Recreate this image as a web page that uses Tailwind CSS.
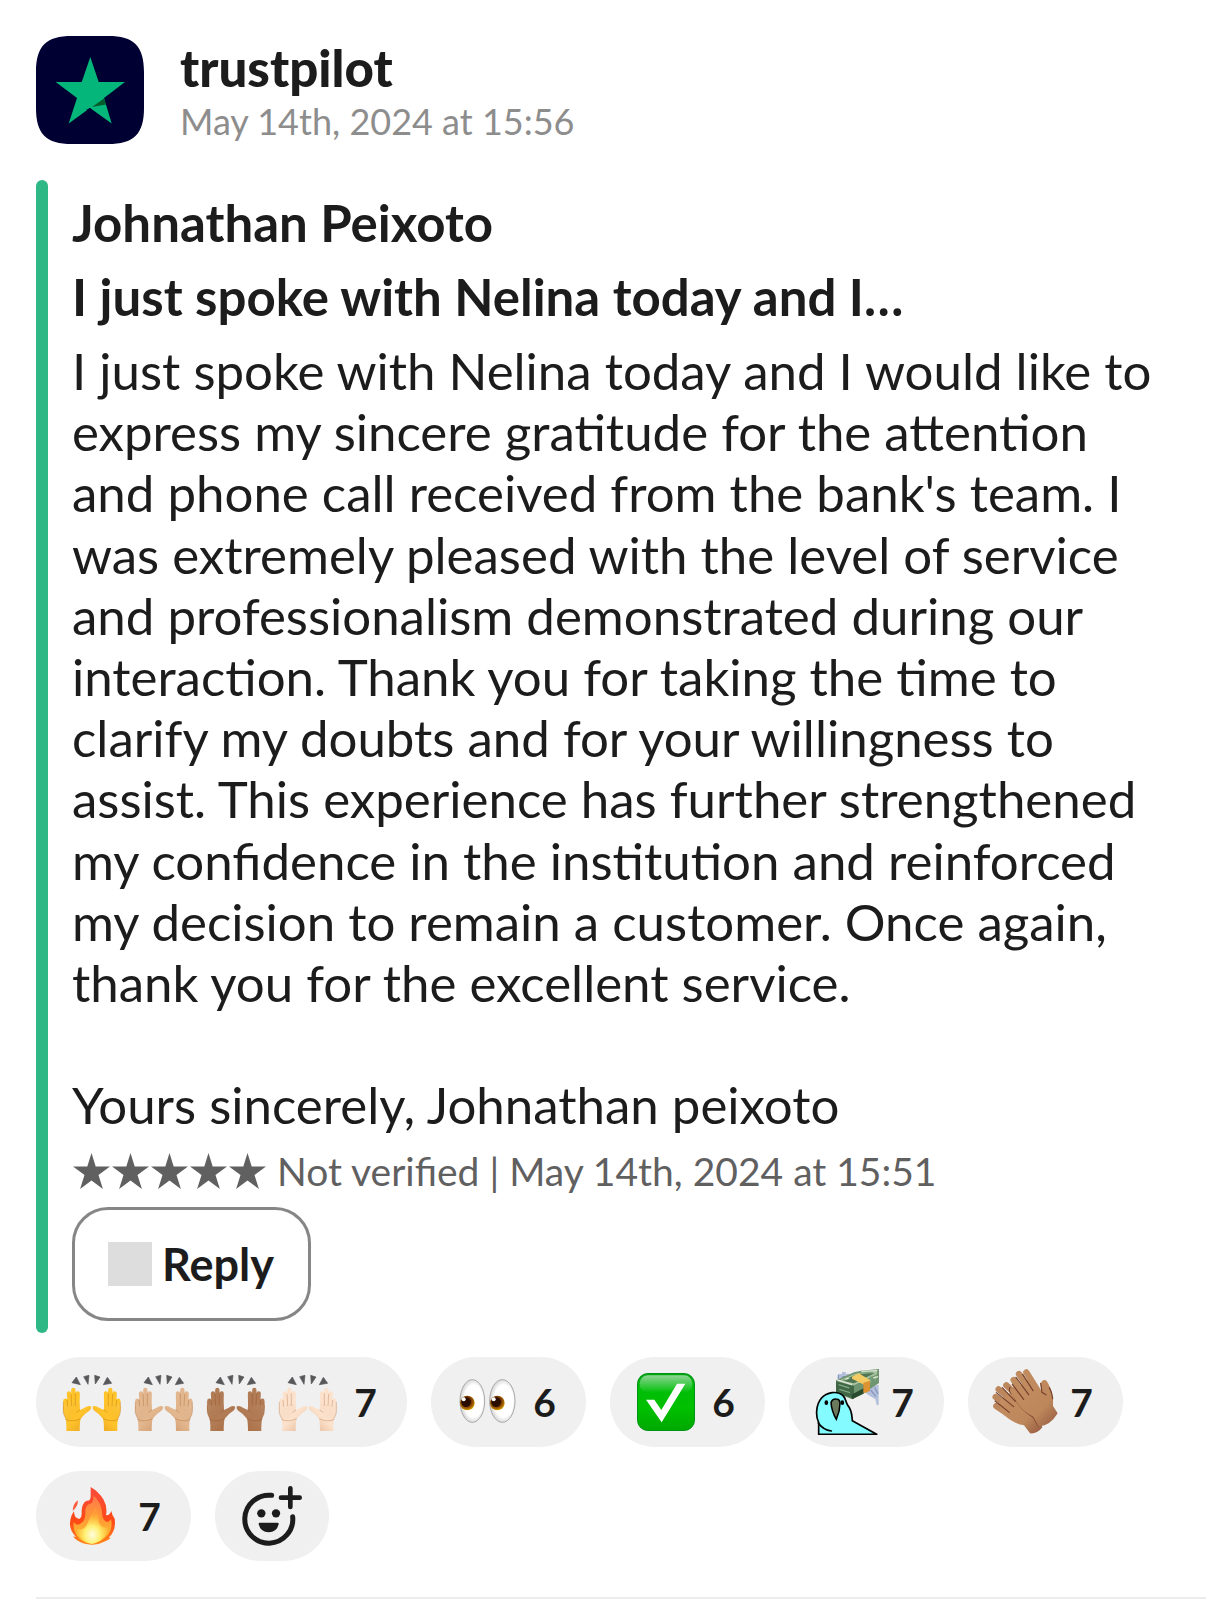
<!DOCTYPE html>
<html lang="en">
<head>
<meta charset="utf-8">
<meta name="viewport" content="width=device-width, initial-scale=1">
<title>trustpilot message</title>
<script src="https://cdn.jsdelivr.net/npm/@tailwindcss/browser@4"></script>
</head>
<body class="bg-white font-['Lato',sans-serif] text-[#1d1c1d]">
<svg class="absolute size-0" aria-hidden="true">
  <defs>
    <linearGradient id="handShade" x1="0" y1="0" x2="1" y2="1">
      <stop offset="0" stop-color="#fff" stop-opacity=".12"/><stop offset=".5" stop-color="#a04000" stop-opacity="0"/><stop offset="1" stop-color="#a04000" stop-opacity=".3"/>
    </linearGradient>
    <linearGradient id="checkGreen" x1="0" y1="0" x2="0" y2="1">
      <stop offset="0" stop-color="#00a310"/><stop offset=".25" stop-color="#00bd08"/><stop offset=".6" stop-color="#00c000"/><stop offset="1" stop-color="#00a800"/>
    </linearGradient>
    <linearGradient id="checkGloss" x1="0" y1="0" x2="0" y2="1">
      <stop offset="0" stop-color="#fff" stop-opacity=".55"/><stop offset="1" stop-color="#fff" stop-opacity="0"/>
    </linearGradient>
    <radialGradient id="iris" cx=".45" cy=".4" r=".6">
      <stop offset=".45" stop-color="#3a1500"/><stop offset=".5" stop-color="#6a3000"/><stop offset=".8" stop-color="#a86400"/><stop offset="1" stop-color="#e0a800"/>
    </radialGradient>
    <radialGradient id="eyeWhite" cx=".55" cy=".5" r=".5">
      <stop offset=".75" stop-color="#fff"/><stop offset="1" stop-color="#dcdcdc"/>
    </radialGradient>
    <linearGradient id="fireOuter" x1="0" y1="0" x2="0" y2="1">
      <stop offset="0" stop-color="#f94b3c"/><stop offset=".6" stop-color="#ff4a16"/><stop offset="1" stop-color="#ff8a1c"/>
    </linearGradient>
    <linearGradient id="fireMiddle" x1="0" y1="0" x2="0" y2="1">
      <stop offset="0" stop-color="#ff7a4a"/><stop offset=".5" stop-color="#ff9a35"/><stop offset="1" stop-color="#ffc62e"/>
    </linearGradient>
    <radialGradient id="fireCore" cx=".5" cy=".75" r=".6">
      <stop offset="0" stop-color="#fffde0"/><stop offset=".4" stop-color="#fff176"/><stop offset="1" stop-color="#ffc22b" stop-opacity=".2"/>
    </radialGradient>
    <linearGradient id="clapSkin" x1="0" y1="0" x2="1" y2="1">
      <stop offset="0" stop-color="#c58e62"/><stop offset=".65" stop-color="#bd875b"/><stop offset="1" stop-color="#94583f"/>
    </linearGradient>
    <symbol id="hand" viewBox="0 0 174 174" overflow="visible">
      <g stroke="currentColor" stroke-width="13" stroke-linecap="round" fill="none">
        <path d="M8 82L10 120M19 60L22 112M32 50V112M45 60L44 112"/>
      </g>
      <path fill="currentColor" d="M1 96L50 90L52 110L66 103Q76 95 84 99Q88 105 80 112Q66 120 54 136Q51 145 51 173H11Q12 148 8 134Q0 118 1 96Z"/>
      <path fill="url(#handShade)" d="M1 96L50 90L52 110L66 103Q76 95 84 99Q88 105 80 112Q66 120 54 136Q51 145 51 173H11Q12 148 8 134Q0 118 1 96Z"/>
      <path d="M13 80L15 100M25 62L27 98M38 60V98M8 138Q28 148 54 136M52 110Q46 112 42 118M2 86V118Q4 128 10 136" fill="none" stroke="#8a3b00" stroke-opacity=".3" stroke-width="2.5"/>
    </symbol>
    <symbol id="raised" viewBox="90 57 198 198">
      <path fill="#58585a" stroke="#58585a" stroke-width="2" d="M126 98L139 81L151 104ZM161 80L177 76L174 103ZM194 76L210 81L196 102ZM220 104L232 82L245 100Z"/>
      <use href="#hand" x="98" y="70" width="174" height="174"/>
      <use href="#hand" x="98" y="70" width="174" height="174" transform="translate(371 0) scale(-1 1)"/>
    </symbol>
    <symbol id="star" viewBox="0 0 39 39">
      <path fill="currentColor" d="M19.500 1L23.700 14.500H38L26.500 23L30.900 37L19.500 28.400L8.100 37L12.500 23L1 14.500H15.300Z"/>
    </symbol>
  </defs>
</svg>

<main class="pt-9 pl-9">
  <article>
    <header class="flex items-center gap-9">
      <svg class="size-27 shrink-0" viewBox="0 0 108 108" role="img" aria-label="trustpilot logo">
        <path fill="#000032" d="M0 36C0 10 10 0 36 0Q54 -1 72 0C98 0 108 10 108 36Q109 54 108 72C108 98 98 108 72 108Q54 109 36 108C10 108 0 98 0 72Q-1 54 0 36Z"/>
        <path fill="#04b67a" d="M54.300 21L62.700 46H89L68 62L75.700 87.500L54 72L32.700 87.500L41 62L19.700 46H45.700Z"/>
        <path fill="#000032" d="M54 72L50 74L57 75Z"/>
        <path fill="#045c2c" d="M56 71L68 62.500L70 68.500Z"/>
      </svg>
      <div>
        <h1 class="text-[51px] leading-[62px] font-black">trustpilot</h1>
        <p class="text-[36px] leading-[44px] text-[#8d8d8d]"><time datetime="2024-05-14T15:56">May 14th, 2024 at 15:56</time></p>
      </div>
    </header>

    <section class="mt-9 flex gap-6">
      <div class="w-3 shrink-0 rounded-full bg-[#2eb886]"></div>
      <div class="flex min-w-0 flex-col items-start gap-3 py-3 pr-9 text-[51px] leading-[1.2]">
        <h2 class="leading-[62px] font-bold">Johnathan Peixoto</h2>
        <h3 class="leading-[62px] font-bold">I just spoke with Nelina today and I…</h3>
        <p class="whitespace-pre-line">I just spoke with Nelina today and I would like to express my sincere gratitude for the attention and phone call received from the bank's team. I was extremely pleased with the level of service and professionalism demonstrated during our interaction. Thank you for taking the time to clarify my doubts and for your willingness to assist. This experience has further strengthened my confidence in the institution and reinforced my decision to remain a customer. Once again, thank you for the excellent service.

Yours sincerely, Johnathan peixoto</p>
        <p class="flex items-center gap-[10px] text-[39px] leading-[48px] text-[#616061]">
          <span class="flex" role="img" aria-label="5 stars">
            <svg class="size-[39px]"><use href="#star"/></svg><svg class="size-[39px]"><use href="#star"/></svg><svg class="size-[39px]"><use href="#star"/></svg><svg class="size-[39px]"><use href="#star"/></svg><svg class="size-[39px]"><use href="#star"/></svg>
          </span>
          <span>Not verified | May 14th, 2024 at 15:51</span>
        </p>
        <button type="button" class="flex h-[114px] items-center gap-[10px] rounded-[36px] border-3 border-[#868686] pr-[34px] pl-[33px] text-[45px] font-bold">
          <span class="size-11 bg-[#dddddd]"></span>Reply
        </button>
      </div>
    </section>

    <div class="mt-6 mr-9 flex flex-wrap gap-6 text-[39px] leading-[48px] font-bold">
      <button type="button" aria-label="Raised hands, 7" class="flex h-[90px] items-center gap-3 rounded-full bg-[#f0f0f0] pr-[30px] pl-6">
        <span class="flex gap-[6px]">
          <svg class="size-[66px] text-[#ffc32b]"><use href="#raised"/></svg>
          <svg class="size-[66px] text-[#e2b78f]"><use href="#raised"/></svg>
          <svg class="size-[66px] text-[#b07b55]"><use href="#raised"/></svg>
          <svg class="size-[66px] text-[#fce2cc]"><use href="#raised"/></svg>
        </span>
        <span class="w-[23px]">7</span>
      </button>
      <button type="button" aria-label="Eyes, 6" class="flex h-[90px] items-center gap-3 rounded-full bg-[#f0f0f0] pr-[30px] pl-6">
        <svg class="size-[66px]" viewBox="105 57 198 198">
          <g stroke="#a9a9a9" stroke-width="3" fill="url(#eyeWhite)"><ellipse cx="157" cy="153" rx="37" ry="64"/><ellipse cx="247" cy="153" rx="38" ry="64"/></g>
          <circle cx="142" cy="159" r="22" fill="url(#iris)"/><circle cx="232" cy="159" r="22" fill="url(#iris)"/>
          <circle cx="138" cy="157" r="14" fill="#2b0d00"/><circle cx="228" cy="157" r="14" fill="#2b0d00"/>
          <circle cx="131" cy="148" r="6" fill="#fff"/><circle cx="221" cy="148" r="6" fill="#fff"/>
        </svg>
        <span class="w-[23px]">6</span>
      </button>
      <button type="button" aria-label="Check mark, 6" class="flex h-[90px] items-center gap-3 rounded-full bg-[#f0f0f0] pr-[30px] pl-6">
        <svg class="size-[66px]" viewBox="102 57 198 198">
          <rect x="112.500" y="70.500" width="171" height="171" rx="31" fill="url(#checkGreen)" stroke="#009414" stroke-width="3"/>
          <rect x="119" y="76" width="158" height="52" rx="24" fill="url(#checkGloss)"/>
          <path fill="#fff" d="M138 149H163L184 180L231 101H256L185 217Z"/>
        </svg>
        <span class="w-[23px]">6</span>
      </button>
      <button type="button" aria-label="Money parrot, 7" class="flex h-[90px] items-center gap-3 rounded-full bg-[#f0f0f0] pr-[30px] pl-6">
        <svg class="size-[66px]" viewBox="99 57 198 198">
          <path fill="#b3bfdb" d="M175 72H186V66H197V71H207V95H175ZM258 112L296 104V165H290L286 148L270 138L256 128Z"/>
          <path fill="none" stroke="#8797bd" stroke-width="4" d="M175 74V90M186 80H204M272 120L288 140M284 112L294 132"/>
          <path fill="#6f9470" d="M168 91L222 67L243 62L298 57V98L245 134L216 148L168 128Z"/>
          <path fill="#a9c3a0" d="M176 92L224 72L250 66L290 62L292 72L222 106Z"/>
          <path fill="#4f7552" d="M186 92L224 76L262 70L284 70L222 100Z"/>
          <path fill="#3f6645" d="M168 94L222 109V146L168 128Z"/>
          <path fill="#284a2e" d="M214 134L252 114V130L216 148Z"/>
          <path stroke="#7ea681" stroke-width="4" fill="none" d="M176 104L208 114M178 118L210 128M238 70L280 66M188 92L210 84M272 78V100M286 74V92"/>
          <path stroke="#dfe9d6" stroke-width="4" fill="none" d="M172 90L216 104M244 64L292 62M280 84L294 80M196 88L206 84"/>
          <path fill="#f3cb63" d="M216 80L236 70L270 90L270 100L252 104L216 86Z"/>
          <path fill="#dd9331" d="M250 98L270 92V122L258 128H250Z"/>
          <path fill="#84fbff" stroke="#000" stroke-width="5" stroke-linejoin="round" d="M116 253V218C106 198 108 164 124 145C140 126 172 121 190 138C198 145 197 158 204 167C216 181 215 192 217 212L290 253Z"/>
          <path fill="none" stroke="#000" stroke-width="5" stroke-linecap="round" d="M115 219C124 232 138 241 154 243"/>
          <ellipse cx="139" cy="158" rx="5.500" ry="7" fill="#000"/><ellipse cx="187" cy="158" rx="5.500" ry="7" fill="#000"/>
          <path fill="#6b7a5c" stroke="#000" stroke-width="4.500" d="M153 158Q157 146 168 147Q180 147 180 160Q180 184 169 208Q155 184 153 158Z"/>
        </svg>
        <span class="w-[23px]">7</span>
      </button>
      <button type="button" aria-label="Clapping hands, 7" class="flex h-[90px] items-center gap-3 rounded-full bg-[#f0f0f0] pr-[30px] pl-6">
        <svg class="size-[66px]" viewBox="126 57 198 198">
          <g stroke="#bc875d" stroke-width="19" stroke-linecap="round" fill="none">
            <path d="M139 168L190 202M137 141L200 188M146 118L210 170M169 106L215 150"/>
          </g>
          <path fill="url(#clapSkin)" d="M150 184Q185 220 222 226L240 250Q262 252 277 232L250 170L190 122L150 150Z"/>
          <path stroke="#74402b" stroke-width="3.500" fill="none" stroke-linecap="round" d="M135 153L178 187M139 128L191 170M157 113L196 154M180 112Q174 126 190 134Q204 172 250 202L266 229"/>
          <g stroke="#bf8b5f" stroke-width="19" stroke-linecap="round" fill="none">
            <path d="M190 122L225 165M191 90L230 150M207 72L245 130M229 67L265 125"/>
          </g>
          <path fill="url(#clapSkin)" d="M184 128L200 156Q216 184 250 200L266 230Q300 228 323 190L309 168V140Q300 105 288 91Q276 87 272 102L274 125L240 84Z"/>
          <path stroke="#74402b" stroke-width="3.500" fill="none" stroke-linecap="round" d="M187 103L221 148M198 82L236 134M218 73L249 122M272 100L276 127L288 134M298 113Q306 126 308 146"/>
        </svg>
        <span class="w-[23px]">7</span>
      </button>
      <button type="button" aria-label="Fire, 7" class="flex h-[90px] items-center gap-3 rounded-full bg-[#f0f0f0] pr-[30px] pl-6">
        <svg class="size-[66px]" viewBox="120 69 198 198">
          <path fill="#ff5a3c" d="M158 152Q159 130 174 121Q173 142 158 152Z"/>
          <path fill="url(#fireOuter)" d="M212 81Q236 95 250 118Q263 140 258 165Q268 168 274 153Q276 166 284 176Q289 212 267 232L271 235Q266 240 256 244Q236 255 215 254Q190 254 170 240Q162 236 160 229L168 231Q148 210 150 188Q152 166 162 154Q162 174 178 177Q186 172 185 158Q184 130 200 122Q212 124 212 108Z"/>
          <path fill="url(#fireMiddle)" d="M220 106Q246 130 246 160Q248 184 262 186Q268 184 273 178Q280 206 262 226Q242 248 216 250Q186 250 170 226Q158 208 161 186Q168 198 180 192Q198 184 196 154Q197 136 208 132Q222 130 220 106Z"/>
          <path fill="url(#fireCore)" d="M226 142Q238 160 236 186Q244 206 264 202Q260 240 218 252Q178 246 170 206Q188 214 200 196Q212 166 226 142Z"/>
        </svg>
        <span class="w-[23px]">7</span>
      </button>
      <button type="button" aria-label="Add reaction" class="flex h-[90px] items-center rounded-full bg-[#f0f0f0] px-6">
        <svg class="size-[66px]" viewBox="657 69 198 198" fill="none" stroke="#1d1c1d" stroke-linecap="round">
          <path stroke-width="15" d="M755 106A72 72 0 1 0 818 170"/>
          <path stroke-width="14" d="M811 85V141M783 113H839"/>
          <circle cx="724" cy="160" r="12.500" fill="#1d1c1d" stroke="none"/><circle cx="768" cy="160" r="12.500" fill="#1d1c1d" stroke="none"/>
          <path fill="#1d1c1d" stroke="none" d="M720 188H772Q777 188 776 193Q770 217 746 217Q722 217 716 193Q715 188 720 188Z"/>
        </svg>
      </button>
    </div>
  </article>
  <hr class="mt-9 border-t-2 border-[#ececec]">
</main>
</body>
</html>
